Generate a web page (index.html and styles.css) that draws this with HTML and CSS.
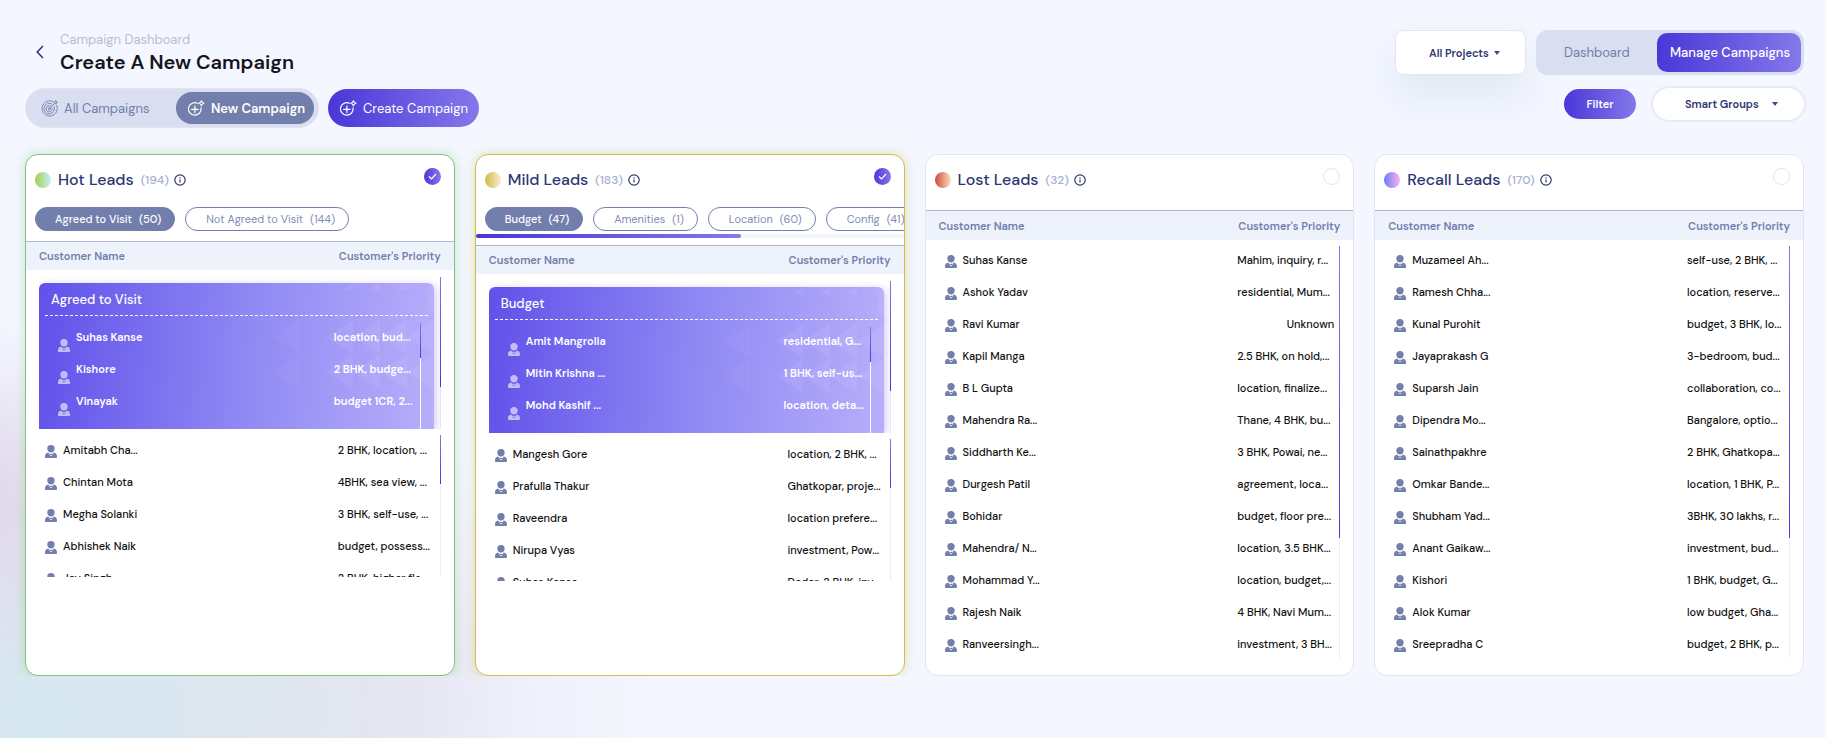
FILE: index.html
```html
<!DOCTYPE html>
<html lang="en">
<head>
<meta charset="utf-8">
<meta name="viewport" content="width=device-width, initial-scale=1">
<title>Create A New Campaign</title>
<link rel="stylesheet" href="styles.css">
</head>
<body>
<svg class="defs" aria-hidden="true">
  <defs>
    <symbol id="person" viewBox="0 0 12 13">
      <path d="M6 0a3.7 3.7 0 0 1 3.7 3.7C9.700 6 8 7.600 6 7.600S2.300 6 2.300 3.700A3.700 3.700 0 0 1 6 0Z" fill="currentColor"/>
      <path d="M3.200 7.400 6 11.600l2.800-4.200c2 .5 3.200 1.900 3.200 3.800v1.100c0 .4-.3.700-.7.700H.7c-.4 0-.7-.3-.7-.7v-1.100C0 9.300 1.200 7.900 3.200 7.400Z" fill="currentColor"/>
      <path d="m4.600 8.500 1.400.6 1.400-.6-.5 1.600H5.100Z" fill="currentColor"/>
    </symbol>
    <symbol id="info" viewBox="0 0 12 12">
      <circle cx="6" cy="6" r="5.200" fill="none" stroke="currentColor" stroke-width="1.200"/>
      <path d="M6 5.400v3.200M6 3.300v1.100" stroke="currentColor" stroke-width="1.200"/>
    </symbol>
    <symbol id="plus-star" viewBox="0 0 17 17">
      <path d="M9.500 3.200A6.300 6.300 0 1 0 13 7.800M6.900 6v6.600M3.600 9.300h6.600" fill="none" stroke="currentColor" stroke-width="1.200" stroke-linecap="round"/>
      <path d="M13.400.7c.4 1.600 1 2.200 2.600 2.600-1.600.4-2.200 1-2.600 2.600-.4-1.600-1-2.200-2.600-2.600 1.600-.4 2.200-1 2.600-2.600Z" fill="none" stroke="currentColor" stroke-width="1.100" stroke-linejoin="round"/>
    </symbol>
    <symbol id="target" viewBox="0 0 17 17">
      <g fill="none" stroke="currentColor" stroke-width=".9">
        <path d="M12.700 2A7.600 7.600 0 1 0 15.300 4.700"/>
        <path d="M11.300 4.300A5.300 5.300 0 1 0 13 6.300"/>
        <path d="M9.900 6.300A3.100 3.100 0 1 0 11.100 7.900"/>
        <circle cx="8.300" cy="8.900" r="1.100"/>
        <path d="m8.500 8.700 5-5.200V1.700L15 .5v1.700h1.600l-1.400 1.500h-1.700"/>
      </g>
    </symbol>
  </defs>
</svg>
<div class="page">
  <header class="bar">
    <div class="heading">
      <button class="back" type="button" aria-label="Back"><svg width="8" height="14" viewBox="0 0 8 14"><path d="M7 1 1.200 7 7 13" fill="none" stroke="currentColor" stroke-width="1.500"/></svg></button>
      <div>
        <p class="crumb">Campaign Dashboard</p>
        <h1>Create A New Campaign</h1>
      </div>
    </div>
    <div class="actions">
      <select class="projects" aria-label="Project"><option>All Projects</option></select>
      <nav class="views">
        <a href="#dashboard">Dashboard</a>
        <a href="#manage" class="active" aria-current="page">Manage Campaigns</a>
      </nav>
    </div>
  </header>
  <div class="bar tools">
    <div class="campaigns">
      <div class="switch">
        <button type="button"><svg><use href="#target"/></svg>All Campaigns</button>
        <button type="button" class="active"><svg><use href="#plus-star"/></svg>New Campaign</button>
      </div>
      <button type="button" class="create"><svg><use href="#plus-star"/></svg>Create Campaign</button>
    </div>
    <div class="filters">
      <button type="button" class="filter">Filter</button>
      <select class="groups" aria-label="Smart groups"><option>Smart Groups</option></select>
    </div>
  </div>

  <main class="board">
    <section class="card hot">
      <div class="card-head">
        <span class="dot"></span><h2>Hot Leads</h2><span class="count">(194)</span><svg class="info"><use href="#info"/></svg>
        <input type="checkbox" class="pick" aria-label="Select Hot Leads" checked>
      </div>
      <div class="chips">
        <button type="button" class="chip on">Agreed to Visit <span>(50)</span></button>
        <button type="button" class="chip">Not Agreed to Visit <span>(144)</span></button>
      </div>
      <table class="leads">
        <thead><tr><th>Customer Name</th><th>Customer's Priority</th></tr></thead>
        <tbody class="group"><tr><td colspan="2">
          <div class="panel">
            <h3>Agreed to Visit</h3>
            <table class="inner"><tbody>
              <tr><td><svg><use href="#person"/></svg>Suhas Kanse</td><td>location, bud...</td></tr>
              <tr><td><svg><use href="#person"/></svg>Kishore</td><td>2 BHK, budge...</td></tr>
              <tr><td><svg><use href="#person"/></svg>Vinayak</td><td>budget 1CR, 2...</td></tr>
            </tbody></table>
          </div>
        </td></tr></tbody>
        <tbody class="rows short">
          <tr><td><svg><use href="#person"/></svg>Amitabh Cha...</td><td>2 BHK, location, ...</td></tr>
          <tr><td><svg><use href="#person"/></svg>Chintan Mota</td><td>4BHK, sea view, ...</td></tr>
          <tr><td><svg><use href="#person"/></svg>Megha Solanki</td><td>3 BHK, self-use, ...</td></tr>
          <tr><td><svg><use href="#person"/></svg>Abhishek Naik</td><td>budget, possess...</td></tr>
          <tr><td><svg><use href="#person"/></svg>Jay Singh</td><td>2 BHK, higher flo...</td></tr>
        </tbody>
      </table>
    </section>

    <section class="card mild">
      <div class="card-head">
        <span class="dot"></span><h2>Mild Leads</h2><span class="count">(183)</span><svg class="info"><use href="#info"/></svg>
        <input type="checkbox" class="pick" aria-label="Select Mild Leads" checked>
      </div>
      <div class="chips scrolling">
        <button type="button" class="chip on">Budget <span>(47)</span></button>
        <button type="button" class="chip">Amenities <span>(1)</span></button>
        <button type="button" class="chip">Location <span>(60)</span></button>
        <button type="button" class="chip">Config <span>(41)</span></button>
      </div>
      <div class="track"><div class="thumb"></div></div>
      <table class="leads">
        <thead><tr><th>Customer Name</th><th>Customer's Priority</th></tr></thead>
        <tbody class="group"><tr><td colspan="2">
          <div class="panel">
            <h3>Budget</h3>
            <table class="inner"><tbody>
              <tr><td><svg><use href="#person"/></svg>Amit Mangrolia</td><td>residential, G...</td></tr>
              <tr><td><svg><use href="#person"/></svg>Mitin Krishna ...</td><td>1 BHK, self-us...</td></tr>
              <tr><td><svg><use href="#person"/></svg>Mohd Kashif ...</td><td>location, deta...</td></tr>
            </tbody></table>
          </div>
        </td></tr></tbody>
        <tbody class="rows short">
          <tr><td><svg><use href="#person"/></svg>Mangesh Gore</td><td>location, 2 BHK, ...</td></tr>
          <tr><td><svg><use href="#person"/></svg>Prafulla Thakur</td><td>Ghatkopar, proje...</td></tr>
          <tr><td><svg><use href="#person"/></svg>Raveendra</td><td>location prefere...</td></tr>
          <tr><td><svg><use href="#person"/></svg>Nirupa Vyas</td><td>investment, Pow...</td></tr>
          <tr><td><svg><use href="#person"/></svg>Suhas Kanse</td><td>Dadar, 2 BHK, inv...</td></tr>
        </tbody>
      </table>
    </section>

    <section class="card lost plain">
      <div class="card-head">
        <span class="dot"></span><h2>Lost Leads</h2><span class="count">(32)</span><svg class="info"><use href="#info"/></svg>
        <input type="checkbox" class="pick" aria-label="Select Lost Leads">
      </div>
      <table class="leads">
        <thead><tr><th>Customer Name</th><th>Customer's Priority</th></tr></thead>
        <tbody class="rows">
          <tr><td><svg><use href="#person"/></svg>Suhas Kanse</td><td>Mahim, inquiry, r...</td></tr>
          <tr><td><svg><use href="#person"/></svg>Ashok Yadav</td><td>residential, Mum...</td></tr>
          <tr><td><svg><use href="#person"/></svg>Ravi Kumar</td><td class="end">Unknown</td></tr>
          <tr><td><svg><use href="#person"/></svg>Kapil Manga</td><td>2.5 BHK, on hold,...</td></tr>
          <tr><td><svg><use href="#person"/></svg>B L Gupta</td><td>location, finalize...</td></tr>
          <tr><td><svg><use href="#person"/></svg>Mahendra Ra...</td><td>Thane, 4 BHK, bu...</td></tr>
          <tr><td><svg><use href="#person"/></svg>Siddharth Ke...</td><td>3 BHK, Powai, ne...</td></tr>
          <tr><td><svg><use href="#person"/></svg>Durgesh Patil</td><td>agreement, loca...</td></tr>
          <tr><td><svg><use href="#person"/></svg>Bohidar</td><td>budget, floor pre...</td></tr>
          <tr><td><svg><use href="#person"/></svg>Mahendra/ N...</td><td>location, 3.5 BHK...</td></tr>
          <tr><td><svg><use href="#person"/></svg>Mohammad Y...</td><td>location, budget,...</td></tr>
          <tr><td><svg><use href="#person"/></svg>Rajesh Naik</td><td>4 BHK, Navi Mum...</td></tr>
          <tr><td><svg><use href="#person"/></svg>Ranveersingh...</td><td>investment, 3 BH...</td></tr>
        </tbody>
      </table>
    </section>

    <section class="card recall plain">
      <div class="card-head">
        <span class="dot"></span><h2>Recall Leads</h2><span class="count">(170)</span><svg class="info"><use href="#info"/></svg>
        <input type="checkbox" class="pick" aria-label="Select Recall Leads">
      </div>
      <table class="leads">
        <thead><tr><th>Customer Name</th><th>Customer's Priority</th></tr></thead>
        <tbody class="rows">
          <tr><td><svg><use href="#person"/></svg>Muzameel Ah...</td><td>self-use, 2 BHK, ...</td></tr>
          <tr><td><svg><use href="#person"/></svg>Ramesh Chha...</td><td>location, reserve...</td></tr>
          <tr><td><svg><use href="#person"/></svg>Kunal Purohit</td><td>budget, 3 BHK, lo...</td></tr>
          <tr><td><svg><use href="#person"/></svg>Jayaprakash G</td><td>3-bedroom, bud...</td></tr>
          <tr><td><svg><use href="#person"/></svg>Suparsh Jain</td><td>collaboration, co...</td></tr>
          <tr><td><svg><use href="#person"/></svg>Dipendra Mo...</td><td>Bangalore, optio...</td></tr>
          <tr><td><svg><use href="#person"/></svg>Sainathpakhre</td><td>2 BHK, Ghatkopa...</td></tr>
          <tr><td><svg><use href="#person"/></svg>Omkar Bande...</td><td>location, 1 BHK, P...</td></tr>
          <tr><td><svg><use href="#person"/></svg>Shubham Yad...</td><td>3BHK, 30 lakhs, r...</td></tr>
          <tr><td><svg><use href="#person"/></svg>Anant Gaikaw...</td><td>investment, bud...</td></tr>
          <tr><td><svg><use href="#person"/></svg>Kishori</td><td>1 BHK, budget, G...</td></tr>
          <tr><td><svg><use href="#person"/></svg>Alok Kumar</td><td>low budget, Gha...</td></tr>
          <tr><td><svg><use href="#person"/></svg>Sreepradha C</td><td>budget, 2 BHK, p...</td></tr>
        </tbody>
      </table>
    </section>
  </main>
</div>
</body>
</html>
```
FILE: styles.css
```css
:root {
  --navy: #2c3572;
  --slate: #727eac;
  --track: #d9def0;
  --brand: linear-gradient(90deg, #4a37d8, #8478ea);
}
* { box-sizing: border-box; }
body {
  margin: 0;
  min-height: 100vh;
  font-family: "DM Sans", Inter, sans-serif;
  font-size: 11px;
  color: #111;
  background:
    radial-gradient(ellipse 60px 180px at 0 500px, rgba(224, 214, 236, .9), rgba(224, 214, 236, 0)),
    radial-gradient(ellipse 620px 340px at 40px 710px, rgba(213, 231, 240, 1), rgba(221, 231, 240, 1) 30%, rgba(228, 229, 241, .95) 60%, rgba(239, 239, 249, .8) 80%, rgba(244, 247, 255, 0)),
    #f4f7ff;
}
h1, h2, h3, p { margin: 0; }
button, select { font: inherit; border: 0; margin: 0; cursor: pointer; }
.defs { position: absolute; width: 0; height: 0; }
.page { padding: 30px 22px 40px 25px; }

.bar { display: flex; justify-content: space-between; align-items: flex-start; height: 45px; }
.heading { display: flex; align-items: center; gap: 6px; }
.back { display: flex; align-items: center; justify-content: flex-end; width: 19px; height: 24px; margin-right: 10px; padding: 0; background: none; color: var(--navy); }
.crumb { font-size: 13px; line-height: 20px; color: #bdbbd3; }
h1 { font-size: 20px; line-height: 24px; font-weight: 600; color: #14141c; }
.actions { display: flex; gap: 10px; height: 45px; }
select {
  appearance: none;
  color: var(--navy);
  font-weight: 600;
  background: #fff url("data:image/svg+xml,%3Csvg xmlns='http://www.w3.org/2000/svg' width='6' height='4'%3E%3Cpath d='M0 0h6L3 4z' fill='%23414b82'/%3E%3C/svg%3E") no-repeat;
}
.projects {
  width: 131px;
  padding: 0 0 0 33px;
  border: 1px solid #e6e6ea;
  border-radius: 8px;
  background-position: 98px 20px;
  box-shadow: 0 20px 40px rgba(112, 144, 176, .16);
}
.views { display: flex; padding: 3px; border-radius: 12px; background: var(--track); font-size: 13px; }
.views a { display: flex; align-items: center; width: 118px; padding-left: 25px; color: var(--slate); text-decoration: none; }
.views .active { width: 144px; padding-left: 13px; border-radius: 10px; background: var(--brand); color: #fff; font-weight: 500; }

.tools { height: 40px; margin: 13px 0 26px; }
.campaigns, .filters { display: flex; align-items: center; }
.campaigns { gap: 9px; font-size: 13px; }
.campaigns button { display: flex; align-items: center; gap: 6px; padding: 0 0 0 12px; color: #fff; font-size: 13px; font-weight: 400; white-space: nowrap; }
.campaigns svg { width: 17px; height: 17px; flex: none; }
.switch { display: flex; padding: 3px 4px 3px 3px; border: 1px solid #e1e3ee; border-radius: 20px; background: var(--track); }
.switch button { width: 138px; height: 32px; border-radius: 16px; background: none; }
.switch button:first-child { width: 147px; color: var(--slate); }
.switch button.active { background: #727eac; font-weight: 600; }
.campaigns .create { width: 151px; height: 38px; border-radius: 19px; background: var(--brand); }
.filters { gap: 17px; }
.filter { width: 72px; height: 30px; border-radius: 15px; background: var(--brand); color: #fff; font-weight: 600; }
.groups { width: 151px; height: 32px; padding: 0 0 0 32px; border-radius: 16px; background-position: 119px 14px; box-shadow: 0 0 3px 1px #dfe0e8; }

.board { display: grid; grid-template-columns: repeat(4, minmax(0, 1fr)); gap: 20px; clip-path: inset(-20px -20px 0 -20px); }
.card { padding-bottom: 17px; overflow: hidden; border: 1px solid #e3e5ee; border-radius: 13px; background: #fff; }
.hot { border-color: #7cc877; box-shadow: 0 0 12px rgba(124, 200, 119, .4); }
.mild { border-color: #cdbe44; box-shadow: 0 0 12px rgba(205, 190, 68, .4); }
.card-head { display: flex; align-items: center; padding: 13px 13px 15px 9px; }
.plain .card-head { padding-bottom: 18px; }
.dot { width: 16px; height: 16px; margin-right: 7px; border-radius: 50%; }
.hot .dot { background: linear-gradient(90deg, #a3cf4e, #c6f2f6); }
.mild .dot { background: linear-gradient(90deg, #cbbd48, #fdeacf); }
.lost .dot { background: linear-gradient(90deg, #d2493f, #fbe0bf); }
.recall .dot { background: linear-gradient(90deg, #6c7dfb, #fbb4f2); }
h2 { font-size: 16px; line-height: 24px; font-weight: 500; color: var(--navy); }
.count { margin: 0 5px 0 7px; font-size: 12px; color: #a6aed2; font-weight: 500; }
.info { width: 12px; height: 12px; color: var(--navy); }
.pick { appearance: none; align-self: flex-start; width: 17px; height: 17px; margin: 0 0 0 auto; border: 1px solid #e3e5ea; border-radius: 50%; }
.pick:checked {
  border: 0;
  background: url("data:image/svg+xml,%3Csvg xmlns='http://www.w3.org/2000/svg' width='17' height='17'%3E%3Cpath d='m5 8.500 2.500 2.500L12 6' fill='none' stroke='white' stroke-width='1.200'/%3E%3C/svg%3E"), var(--brand);
}

.chips { display: flex; gap: 10px; padding: 0 0 10px 9px; overflow: hidden; }
.scrolling { padding-bottom: 3px; }
.chip { flex: none; height: 24px; padding: 0 13px 0 20px; border: 1px solid var(--slate); border-radius: 12px; background: #fff; color: #7f8ab6; font-weight: 400; white-space: nowrap; }
.chip span { margin-left: 4px; }
.chip.on { padding-left: 19px; background: var(--slate); color: #fff; font-weight: 500; }
.track { height: 4px; margin-bottom: 7px; border-radius: 2px; background: #f0f4fc; }
.thumb { width: 62%; height: 100%; border-radius: 2px; background: var(--brand); }

table, thead, tbody, td, th { display: block; padding: 0; }
th, td { text-align: left; white-space: nowrap; }
thead tr { display: flex; align-items: center; justify-content: space-between; height: 29px; padding: 0 13px; border-top: 1px solid #b0b3d0; background: #eef2fb; }
.plain thead tr { height: 30px; }
th { color: var(--slate); font-weight: 600; }

/* 1px scroll indicators are drawn on the right edge of each scrolling area */
.group, .rows {
  --thumb: 292px;
  background:
    linear-gradient(#8478ea, #4a37d8) right top / 1px var(--thumb) no-repeat,
    linear-gradient(#e9edf8, #e9edf8) right top / 1px 100% no-repeat;
}
.group { --thumb: 110px; height: 152px; margin: 7px 13px 6px; padding-top: 6px; overflow: hidden; }
.group > tr, .group > tr > td { display: block; }
.panel {
  height: 146px;
  margin-right: 7px;
  padding: 7px 6px 0;
  border-radius: 6px 6px 0 0;
  background:
    url("data:image/svg+xml,%3Csvg xmlns='http://www.w3.org/2000/svg' width='162' height='110' fill='white'%3E%3Cpath d='M0 54 28 37v34zM0 89l28-17v34z' fill-opacity='.03'/%3E%3Cpath d='M54 54 81 37v34zM54 89l27-17v34zM81 54l27-17v34zM81 89l27-17v34zM108 54l27-17v34zM108 89l27-17v34zM135 54l27-17v34zM135 89l27-17v34zM70 7 81 0v7zM97 7l11-7v7zM124 7l11-7v7zM151 7l11-7v29l-6-4V7z' fill-opacity='.07'/%3E%3C/svg%3E") right top no-repeat,
    linear-gradient(95deg, #6151ea, #918bf4 55%, #b8aefa);
  box-shadow: 2px 2px 8px rgba(98, 81, 234, .3);
  color: #fff;
}
h3 { height: 26px; padding-left: 6px; border-bottom: 1px dashed #fff; font-size: 13px; line-height: 20px; font-weight: 500; }
.inner {
  height: 106px;
  margin: 7px 7px 0 0;
  background:
    linear-gradient(#8478ea, #4a37d8) right top / 1px 35px no-repeat,
    linear-gradient(#fff, #fff) right top / 1px 100% no-repeat;
}
.rows { margin: 6px 13px 0; overflow: hidden; font-weight: 500; }
.short { --thumb: 49px; height: 142px; margin-top: 0; padding-top: 1px; }
.rows tr, .inner tr { display: flex; justify-content: space-between; height: 28px; margin-bottom: 4px; padding: 0 6px; line-height: 28px; }
.rows tr:last-child { margin-bottom: 0; }
.rows td:first-child, .inner td:first-child { display: flex; align-items: center; gap: 6px; }
.rows td + td { width: 97px; }
.rows td.end { text-align: right; }
.inner tr { padding: 0 7px 0 13px; font-weight: 600; }
.inner td + td { width: 80px; }
.rows svg, .inner svg { width: 12px; height: 13px; margin-top: 3px; color: var(--slate); }
.inner svg { margin-top: 16px; color: #c3bdf7; }
```
